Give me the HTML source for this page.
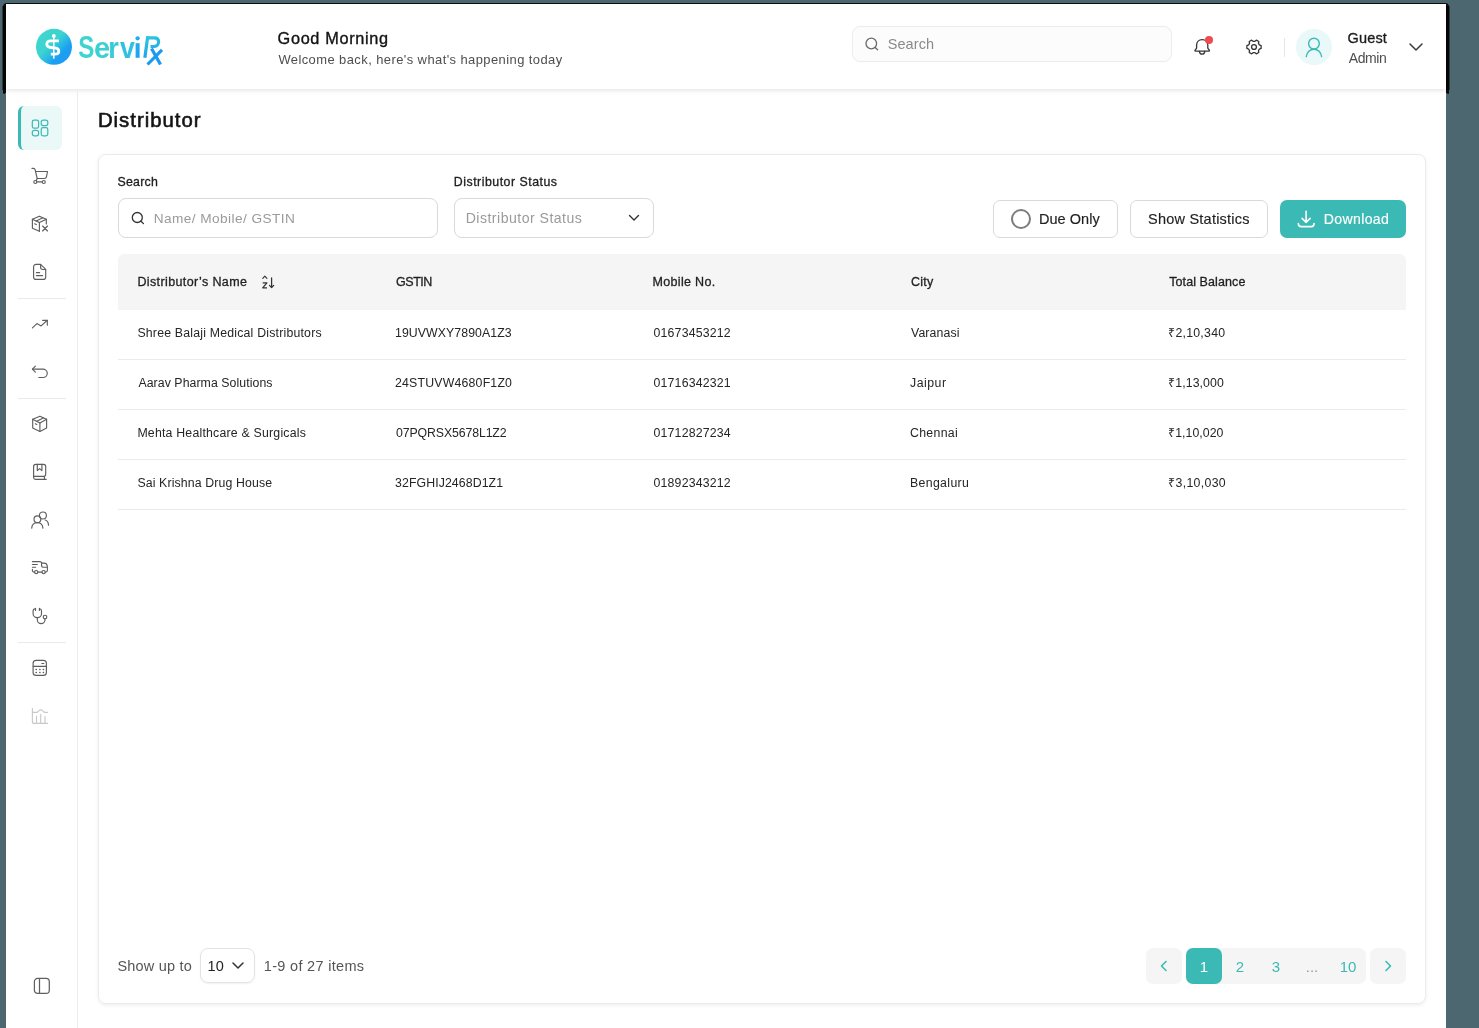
<!DOCTYPE html>
<html><head><meta charset="utf-8">
<style>
*{box-sizing:border-box;margin:0;padding:0}
html,body{width:1479px;height:1028px;overflow:hidden;background:#4c676f;font-family:"Liberation Sans",sans-serif;color:#1a1a1a}
#root{position:absolute;left:0;top:0;width:1479px;height:1028px;will-change:transform}
#root div{position:absolute}
.t{white-space:nowrap;line-height:1}
svg{position:absolute;overflow:visible}
</style></head><body><div id="root">

<div style="left:3px;top:3px;width:1446px;height:90px;background:#0d0d0d;border-radius:4px 4px 0 0"></div>
<div style="left:2px;top:6px;width:1448px;height:84px;background:rgba(0,0,0,0.45)"></div>
<div style="left:3px;top:92px;width:2px;height:2px;background:rgba(0,0,0,0.6)"></div>
<div style="left:1447px;top:92px;width:2px;height:2px;background:rgba(0,0,0,0.6)"></div>
<div style="left:6px;top:4px;width:1440px;height:1030px;background:#fff"></div>
<div style="left:6px;top:4px;width:1440px;height:85px;background:#fff;box-shadow:0 2px 3px rgba(0,0,0,0.06),0 3px 7px rgba(0,0,0,0.03)"></div>
<!-- logo -->
<svg style="left:34px;top:27px" width="40" height="40" viewBox="0 0 40 40">
  <defs><linearGradient id="lg1" x1="0" y1="0" x2="1" y2="1"><stop offset="0" stop-color="#40d8cd"/><stop offset="0.42" stop-color="#3cd3d0"/><stop offset="0.55" stop-color="#2bbee1"/><stop offset="0.7" stop-color="#1c9ff1"/><stop offset="1" stop-color="#1a9af2"/></linearGradient></defs>
  <circle cx="20" cy="19.8" r="18" fill="url(#lg1)"/>
  <path d="M19.8 9.5 L19.8 31.8" stroke="#fff" stroke-width="1.45"/>
  <circle cx="19.8" cy="8.9" r="1.95" fill="#fff"/>
  <path d="M24.9 13.9 L16.5 13.9 C14.2 13.9 12.8 15.3 12.8 17.1 C12.8 19 14.3 20.3 16.5 20.5 L20.8 20.9 C23.2 21.1 24.8 22.4 24.8 24.2 C24.8 26 23.3 27.2 21 27.2 L16.8 27.2" fill="none" stroke="#fff" stroke-width="2.8" stroke-linecap="butt"/>
</svg>
<svg style="left:70px;top:20px" width="110" height="50" viewBox="70 20 110 50">
  <defs><linearGradient id="lg2" gradientUnits="userSpaceOnUse" x1="79" y1="36" x2="165" y2="66"><stop offset="0" stop-color="#3fd5cf"/><stop offset="0.22" stop-color="#3cd1d2"/><stop offset="0.48" stop-color="#2cbde3"/><stop offset="0.72" stop-color="#1c9ff1"/><stop offset="1" stop-color="#1a9af2"/></linearGradient><linearGradient id="lg3" gradientUnits="userSpaceOnUse" x1="150" y1="36" x2="156" y2="58"><stop offset="0" stop-color="#2cc6dd"/><stop offset="0.45" stop-color="#25b5e6"/><stop offset="1" stop-color="#1a9cf2"/></linearGradient></defs>
  <g fill="url(#lg2)" font-family="Liberation Sans" font-weight="700">
    <text transform="translate(78.33,57.8) scale(0.768,1)" x="0" y="0" font-size="31.4" fill="#3ed4cf">S</text>
    <text transform="translate(93.99,57.8) scale(1.014,1)" x="0" y="0" font-size="28.7" fill="#3cd1d1">e</text>
    <text transform="translate(108.31,57.8) scale(0.944,1)" x="0" y="0" font-size="28.7" fill="#37cad8">r</text>
    <text transform="translate(120,57.8) scale(0.931,1)" x="0" y="0" font-size="28.7" fill="#30c1e0">v</text>
    <rect x="135.6" y="43.2" width="4" height="14.6"/>
    <circle cx="137.6" cy="38.3" r="2.15"/>
  </g>
  <g fill="none" stroke="url(#lg3)" stroke-width="3.2">
    <path d="M144.85 57.7 L147.75 36.2"/>
    <path d="M147.2 37.85 L154.5 37.85 C157.5 37.85 158.6 40 158.6 42 C158.6 44.5 156.5 46.5 153.5 46.5 L150.5 46.5"/>
  </g>
  <g fill="none" stroke="#1a9af2" stroke-width="3.2">
    <path d="M151.5 48.5 L160.5 64.5"/>
    <path d="M162 49.8 L147.5 64.5"/>
  </g>
</svg>

<div class="t" style="left:277.60px;top:30.04px;font-size:16.3px;color:#121212;letter-spacing:0.664px;-webkit-text-stroke:0.35px #121212">Good Morning</div>
<div class="t" style="left:278.40px;top:53.89px;font-size:12.95px;color:#4e4e4e;letter-spacing:0.429px">Welcome back, here's what's happening today</div>
<div style="left:852px;top:26px;width:320px;height:36px;border:1px solid #ececec;border-radius:8px;background:#fcfcfc"></div>
<svg style="left:860px;top:32px" width="24" height="24" viewBox="0 0 24 24"><circle cx="11.3" cy="11.5" r="5.3" fill="none" stroke="#6a6a6a" stroke-width="1.3"/><path d="M15.2 15.5 L17.6 17.8" stroke="#6a6a6a" stroke-width="1.3" stroke-linecap="round"/></svg>
<div class="t" style="left:887.70px;top:37.08px;font-size:14.5px;color:#8a8a8a;letter-spacing:0.080px">Search</div>
<svg style="left:1188px;top:31px" width="32" height="32" viewBox="0 0 32 32">
  <path fill="none" stroke="#353535" stroke-width="1.3" stroke-linejoin="round" d="M14.2 8.6 C10.9 8.6 8.6 10.8 8.6 14 L8.6 17 C8.6 17.8 6.9 18.6 6.9 19.5 C6.9 19.9 7.2 20.1 7.6 20.1 L20.8 20.1 C21.2 20.1 21.5 19.9 21.5 19.5 C21.5 18.6 19.8 17.8 19.8 17 L19.8 14 C19.8 10.8 17.5 8.6 14.2 8.6 Z"/>
  <path fill="none" stroke="#353535" stroke-width="1.3" stroke-linecap="round" d="M11.4 20.4 C11.6 22.3 12.7 23.2 14.1 23.2 C15.5 23.2 16.6 22.3 16.8 20.4"/>
</svg>
<div style="left:1205.05px;top:35.85px;width:8.1px;height:8.1px;border-radius:50%;background:#ee4a4f"></div>
<svg style="left:1238px;top:31px" width="32" height="32" viewBox="0 0 32 32">
  <circle cx="16" cy="16" r="2.45" fill="none" stroke="#353535" stroke-width="1.3"/>
  <path fill="none" stroke="#353535" stroke-width="1.3" stroke-linejoin="round" d="M23.12 14.62 L23.12 17.38 L21.37 18.06 L20.47 19.62 L20.76 21.47 L18.36 22.86 L16.90 21.68 L15.10 21.68 L13.64 22.86 L11.24 21.47 L11.53 19.62 L10.63 18.06 L8.88 17.38 L8.88 14.62 L10.63 13.94 L11.53 12.38 L11.24 10.53 L13.64 9.14 L15.10 10.32 L16.90 10.32 L18.36 9.14 L20.76 10.53 L20.47 12.38 L21.37 13.94 Z"/>
</svg>
<div style="left:1284px;top:38px;width:1px;height:19px;background:#e6e6e6"></div>
<div style="left:1296px;top:29px;width:36px;height:36px;border-radius:50%;background:#e9f8f8"></div>
<svg style="left:1296px;top:29px" width="36" height="36" viewBox="0 0 36 36">
  <circle cx="17.95" cy="14.6" r="5.35" fill="none" stroke="#3bb9b4" stroke-width="1.4"/>
  <path d="M10.3 27.6 C10.8 23.3 14 20.3 17.95 20.3 C21.9 20.3 25.1 23.3 25.6 27.6" fill="none" stroke="#3bb9b4" stroke-width="1.4" stroke-linecap="round"/>
</svg>
<div class="t" style="left:1347.50px;top:30.78px;font-size:14.5px;color:#1b1b1b;letter-spacing:0.175px;-webkit-text-stroke:0.3px #1b1b1b">Guest</div>
<div class="t" style="left:1348.80px;top:51.30px;font-size:14.0px;color:#4d4d4d;letter-spacing:-0.450px">Admin</div>
<svg style="left:1407px;top:40px" width="16" height="14" viewBox="0 0 16 14"><path d="M3 4 L9 10 L15 4" fill="none" stroke="#3a3a3a" stroke-width="1.5" stroke-linecap="round" stroke-linejoin="round"/></svg>
<div style="left:77px;top:89px;width:1px;height:940px;background:#ededed"></div>
<div style="left:18px;top:106px;width:44px;height:44px;border-radius:6px;background:#eaf8f8;border-left:3px solid #3bb9b4"></div>
<div style="left:18px;top:298px;width:48px;height:1px;background:#e9e9e9"></div>
<div style="left:18px;top:398px;width:48px;height:1px;background:#e9e9e9"></div>
<div style="left:18px;top:642px;width:48px;height:1px;background:#e9e9e9"></div>
<div class="t" style="left:97.90px;top:110.00px;font-size:20.35px;color:#141414;letter-spacing:0.990px;-webkit-text-stroke:0.6px #141414">Distributor</div>
<div style="left:98px;top:154px;width:1328px;height:850px;border:1px solid #ebebeb;border-radius:8px;box-shadow:0 2px 3px rgba(0,0,0,0.045),0 0 6px rgba(0,0,0,0.035)"></div>
<div class="t" style="left:117.50px;top:175.80px;font-size:12.35px;color:#1d1d1d;letter-spacing:0.260px;-webkit-text-stroke:0.3px #1d1d1d">Search</div>
<div class="t" style="left:453.80px;top:175.80px;font-size:12.35px;color:#1d1d1d;letter-spacing:0.500px;-webkit-text-stroke:0.3px #1d1d1d">Distributor Status</div>
<div style="left:118px;top:198px;width:320px;height:40px;border:1px solid #d9d9d9;border-radius:8px"></div>
<svg style="left:130px;top:210px" width="16" height="16" viewBox="0 0 16 16"><circle cx="7.3" cy="7.5" r="5" fill="none" stroke="#333" stroke-width="1.3"/><path d="M11 11.2 L13.5 13.6" stroke="#333" stroke-width="1.3" stroke-linecap="round"/></svg>
<div class="t" style="left:153.80px;top:211.79px;font-size:13.66px;color:#9a9a9a;letter-spacing:0.411px">Name/ Mobile/ GSTIN</div>
<div style="left:454px;top:198px;width:200px;height:40px;border:1px solid #d9d9d9;border-radius:8px"></div>
<div class="t" style="left:465.70px;top:211.21px;font-size:14.1px;color:#9a9a9a;letter-spacing:0.476px">Distributor Status</div>
<svg style="left:627px;top:212px" width="14" height="12" viewBox="0 0 14 12"><path d="M2.5 3.5 L7 8 L11.5 3.5" fill="none" stroke="#333" stroke-width="1.4" stroke-linecap="round" stroke-linejoin="round"/></svg>
<div style="left:993px;top:200px;width:125px;height:38px;border:1px solid #d9d9d9;border-radius:7px"></div>
<div style="left:1010.9px;top:209px;width:20px;height:20px;border:2px solid #7d7d7d;border-radius:50%"></div>
<div class="t" style="left:1039.00px;top:211.98px;font-size:14.5px;color:#1f1f1f;letter-spacing:0.043px;-webkit-text-stroke:0.15px #1f1f1f">Due Only</div>
<div style="left:1130px;top:200px;width:138px;height:38px;border:1px solid #d9d9d9;border-radius:7px"></div>
<div class="t" style="left:1148.00px;top:211.98px;font-size:14.5px;color:#1f1f1f;letter-spacing:0.229px;-webkit-text-stroke:0.15px #1f1f1f">Show Statistics</div>
<div style="left:1280px;top:200px;width:126px;height:38px;border-radius:7px;background:#3bb9b4"></div>
<svg style="left:1295px;top:208px" width="22" height="22" viewBox="0 0 22 22">
  <path d="M11.1 3.3 L11.1 14.2 M7.1 10.4 L11.1 14.4 L15.1 10.4" fill="none" stroke="#fff" stroke-width="1.6" stroke-linecap="round" stroke-linejoin="round"/>
  <path d="M3.3 15.5 C3.3 17.4 4.4 18.6 6.3 18.6 L16.1 18.6 C18 18.6 19.1 17.4 19.1 15.5" fill="none" stroke="#fff" stroke-width="1.6" stroke-linecap="round" stroke-linejoin="round"/>
</svg>
<div class="t" style="left:1323.80px;top:212.21px;font-size:14.1px;color:#fff;letter-spacing:0.343px;-webkit-text-stroke:0.15px #fff">Download</div>
<div style="left:118px;top:254px;width:1288px;height:56px;background:#f5f5f5;border-radius:6px 6px 0 0"></div>
<div class="t" style="left:137.40px;top:275.88px;font-size:12.5px;color:#1f1f1f;letter-spacing:0.382px;-webkit-text-stroke:0.3px #1f1f1f">Distributor’s Name</div>
<div class="t" style="left:396.00px;top:275.88px;font-size:12.5px;color:#1f1f1f;letter-spacing:-0.450px;-webkit-text-stroke:0.3px #1f1f1f">GSTIN</div>
<div class="t" style="left:652.60px;top:275.88px;font-size:12.5px;color:#1f1f1f;letter-spacing:0.311px;-webkit-text-stroke:0.3px #1f1f1f">Mobile No.</div>
<div class="t" style="left:911.00px;top:275.88px;font-size:12.5px;color:#1f1f1f;letter-spacing:0.267px;-webkit-text-stroke:0.3px #1f1f1f">City</div>
<div class="t" style="left:1169.20px;top:275.88px;font-size:12.5px;color:#1f1f1f;letter-spacing:0.092px;-webkit-text-stroke:0.3px #1f1f1f">Total Balance</div>
<svg style="left:259px;top:273px" width="18" height="18" viewBox="0 0 18 18">
  <path d="M3.8 5.4 L5.85 3.1 L7.9 5.4" fill="none" stroke="#333" stroke-width="1.1" stroke-linecap="round" stroke-linejoin="round"/>
  <path d="M3.7 9.9 L7.9 9.9 L3.7 14.8 L8 14.8" fill="none" stroke="#333" stroke-width="1.25" stroke-linejoin="round"/>
  <path d="M12.6 4.9 L12.6 14.6 M10.5 12.4 L12.6 14.6 L14.7 12.4" fill="none" stroke="#333" stroke-width="1.25" stroke-linecap="round" stroke-linejoin="round"/>
</svg>
<div style="left:118px;top:310px;width:1288px;height:50px;border-bottom:1px solid #ebebeb"></div>
<div class="t" style="left:137.40px;top:326.94px;font-size:12.3px;color:#252525;letter-spacing:0.203px">Shree Balaji Medical Distributors</div>
<div class="t" style="left:395.00px;top:326.94px;font-size:12.3px;color:#252525;letter-spacing:0.079px">19UVWXY7890A1Z3</div>
<div class="t" style="left:653.60px;top:326.94px;font-size:12.3px;color:#252525;letter-spacing:0.170px">01673453212</div>
<div class="t" style="left:911.00px;top:326.94px;font-size:12.3px;color:#252525;letter-spacing:0.114px">Varanasi</div>
<div class="t" style="left:1168.20px;top:326.94px;font-size:12.3px;color:#252525;letter-spacing:0.250px">₹2,10,340</div>
<div style="left:118px;top:360px;width:1288px;height:50px;border-bottom:1px solid #ebebeb"></div>
<div class="t" style="left:138.40px;top:376.94px;font-size:12.3px;color:#252525;letter-spacing:0.071px">Aarav Pharma Solutions</div>
<div class="t" style="left:395.00px;top:376.94px;font-size:12.3px;color:#252525;letter-spacing:0.200px">24STUVW4680F1Z0</div>
<div class="t" style="left:653.60px;top:376.94px;font-size:12.3px;color:#252525;letter-spacing:0.170px">01716342321</div>
<div class="t" style="left:910.00px;top:376.94px;font-size:12.3px;color:#252525;letter-spacing:0.500px">Jaipur</div>
<div class="t" style="left:1168.20px;top:376.94px;font-size:12.3px;color:#252525;letter-spacing:0.088px">₹1,13,000</div>
<div style="left:118px;top:410px;width:1288px;height:50px;border-bottom:1px solid #ebebeb"></div>
<div class="t" style="left:137.40px;top:426.94px;font-size:12.3px;color:#252525;letter-spacing:0.215px">Mehta Healthcare &amp; Surgicals</div>
<div class="t" style="left:396.00px;top:426.94px;font-size:12.3px;color:#252525;letter-spacing:-0.107px">07PQRSX5678L1Z2</div>
<div class="t" style="left:653.60px;top:426.94px;font-size:12.3px;color:#252525;letter-spacing:0.170px">01712827234</div>
<div class="t" style="left:910.00px;top:426.94px;font-size:12.3px;color:#252525;letter-spacing:0.317px">Chennai</div>
<div class="t" style="left:1168.20px;top:426.94px;font-size:12.3px;color:#252525;letter-spacing:0.037px">₹1,10,020</div>
<div style="left:118px;top:460px;width:1288px;height:50px;border-bottom:1px solid #ebebeb"></div>
<div class="t" style="left:137.40px;top:476.94px;font-size:12.3px;color:#252525;letter-spacing:0.129px">Sai Krishna Drug House</div>
<div class="t" style="left:395.00px;top:476.94px;font-size:12.3px;color:#252525;letter-spacing:0.100px">32FGHIJ2468D1Z1</div>
<div class="t" style="left:653.60px;top:476.94px;font-size:12.3px;color:#252525;letter-spacing:0.170px">01892343212</div>
<div class="t" style="left:910.00px;top:476.94px;font-size:12.3px;color:#252525;letter-spacing:0.350px">Bengaluru</div>
<div class="t" style="left:1168.20px;top:476.94px;font-size:12.3px;color:#252525;letter-spacing:0.325px">₹3,10,030</div>
<div class="t" style="left:117.40px;top:959.38px;font-size:14.5px;color:#555;letter-spacing:0.211px">Show up to</div>
<div style="left:200px;top:948px;width:55px;height:35px;border:1px solid #e3e3e3;border-radius:8px;box-shadow:0 1px 2px rgba(0,0,0,0.06)"></div>
<div class="t" style="left:207.60px;top:959.38px;font-size:14.5px;color:#222">10</div>
<svg style="left:230px;top:959px" width="16" height="14" viewBox="0 0 16 14"><path d="M3 4 L8 9 L13 4" fill="none" stroke="#333" stroke-width="1.5" stroke-linecap="round" stroke-linejoin="round"/></svg>
<div class="t" style="left:263.80px;top:959.38px;font-size:14.5px;color:#555;letter-spacing:0.314px">1-9 of 27 items</div>
<div style="left:1146px;top:948px;width:36px;height:36px;border-radius:7px;background:#f5f5f5"></div>
<svg style="left:1156px;top:958px" width="16" height="16" viewBox="0 0 16 16"><path d="M10 3.5 L5.5 8 L10 12.5" fill="none" stroke="#3bb9b4" stroke-width="1.6" stroke-linecap="round" stroke-linejoin="round"/></svg>
<div style="left:1186px;top:948px;width:180px;height:36px;border-radius:7px;background:#f5f5f5"></div>
<div style="left:1186px;top:948px;width:36px;height:36px;border-radius:7px;background:#3bb9b4"></div>
<div class="t" style="left:1174px;top:958.75px;width:60px;text-align:center;font-size:15px;color:#fff">1</div>
<div class="t" style="left:1210px;top:958.75px;width:60px;text-align:center;font-size:15px;color:#3bb9b4">2</div>
<div class="t" style="left:1246px;top:958.75px;width:60px;text-align:center;font-size:15px;color:#3bb9b4">3</div>
<div class="t" style="left:1282px;top:958.75px;width:60px;text-align:center;font-size:15px;color:#999">...</div>
<div class="t" style="left:1318px;top:958.75px;width:60px;text-align:center;font-size:15px;color:#3bb9b4">10</div>
<div style="left:1370px;top:948px;width:36px;height:36px;border-radius:7px;background:#f5f5f5"></div>
<svg style="left:1380px;top:958px" width="16" height="16" viewBox="0 0 16 16"><path d="M6 3.5 L10.5 8 L6 12.5" fill="none" stroke="#3bb9b4" stroke-width="1.6" stroke-linecap="round" stroke-linejoin="round"/></svg>
<!-- SIDEBAR ICONS -->
<svg style="left:28px;top:116px" width="24" height="24" viewBox="0 0 24 24" fill="none" stroke="#3bb9b4" stroke-width="1.2" stroke-linecap="round" stroke-linejoin="round"><rect x="4.3" y="4.1" width="6.3" height="8.1" rx="1.8"/><rect x="13.2" y="4.2" width="6.6" height="5.4" rx="2"/><rect x="4.3" y="14.3" width="6.3" height="5.5" rx="2"/><rect x="13.2" y="11.6" width="6.6" height="8.2" rx="1.8"/></svg>
<svg style="left:28px;top:164px" width="24" height="24" viewBox="0 0 24 24" fill="none" stroke="#5e5e5e" stroke-width="1.15" stroke-linecap="round" stroke-linejoin="round"><path d="M4 4.4 L5.4 4.4 C6.2 4.4 6.9 4.9 7.1 5.7 L9.2 14.5 L8.3 16.4"/><path d="M7.6 7.5 L19.5 7.5 L18.5 12.6 C18.3 13.7 17.4 14.5 16.3 14.5 L9.2 14.5"/><path d="M8.9 17.8 L14.2 17.8"/><circle cx="7.3" cy="18" r="1.5"/><circle cx="15.8" cy="18" r="1.5"/></svg>
<svg style="left:28px;top:212px" width="24" height="24" viewBox="0 0 24 24" fill="none" stroke="#5e5e5e" stroke-width="1.15" stroke-linecap="round" stroke-linejoin="round"><path d="M18.3 12 L18.3 7.3 L11.4 4.2 L4.4 7.3 L4.4 16.2 L11.4 19.3"/><path d="M4.4 7.3 L11.4 10.6 L18.3 7.3"/><path d="M11.4 10.6 L11.4 19.3"/><path d="M8.2 8.9 L14.8 5.8"/><path d="M6.6 11.8 L8.3 12.6"/><path d="M14.6 14 L19.5 19 M19.5 14 L14.6 19"/></svg>
<svg style="left:28px;top:260px" width="24" height="24" viewBox="0 0 24 24" fill="none" stroke="#5e5e5e" stroke-width="1.15" stroke-linecap="round" stroke-linejoin="round"><path d="M12.6 4.3 L8 4.3 C6.6 4.3 5.6 5.4 5.6 6.8 L5.6 16.9 C5.6 18.3 6.6 19.4 8 19.4 L15.3 19.4 C16.7 19.4 17.7 18.3 17.7 16.9 L17.7 9.4 Z"/><path d="M12.6 4.5 L12.6 7.3 C12.6 8.6 13.5 9.5 14.8 9.5 L17.6 9.5"/><path d="M8.4 12.6 L11.6 12.6 M8.4 15.6 L14.6 15.6"/></svg>
<svg style="left:28px;top:312px" width="24" height="24" viewBox="0 0 24 24" fill="none" stroke="#5e5e5e" stroke-width="1.15" stroke-linecap="round" stroke-linejoin="round"><path d="M4.4 15.8 L8.9 11.6 L13.1 13.9 L19.3 8.3"/><path d="M14.6 8.3 L19.3 8.3 L19.3 13.2"/></svg>
<svg style="left:28px;top:360px" width="24" height="24" viewBox="0 0 24 24" fill="none" stroke="#5e5e5e" stroke-width="1.15" stroke-linecap="round" stroke-linejoin="round"><path d="M7.4 6.1 L4.4 9.1 L7.4 12.1"/><path d="M4.6 9.1 L14.9 9.1 C17.3 9.1 19.3 11 19.3 13.3 C19.3 15.6 17.3 17.5 14.9 17.5 L10.8 17.5"/></svg>
<svg style="left:28px;top:412px" width="24" height="24" viewBox="0 0 24 24" fill="none" stroke="#5e5e5e" stroke-width="1.15" stroke-linecap="round" stroke-linejoin="round"><path d="M11.9 4.2 L18.6 7.2 L18.6 16.1 L11.9 19.5 L4.7 16.1 L4.7 7.2 Z"/><path d="M4.7 7.2 L11.9 10.9 L18.6 7.2"/><path d="M11.9 10.9 L11.9 19.5"/><path d="M8.8 9.2 L15.3 5.9"/><path d="M7.4 11.8 L8.8 12.5"/></svg>
<svg style="left:28px;top:460px" width="24" height="24" viewBox="0 0 24 24" fill="none" stroke="#5e5e5e" stroke-width="1.15" stroke-linecap="round" stroke-linejoin="round"><path d="M5.6 16.4 L5.6 6.5 C5.6 5.3 6.6 4.3 7.8 4.3 L15.5 4.3 C16.7 4.3 17.7 5.3 17.7 6.5 L17.7 14.2 C17.7 15.4 16.7 16.4 15.5 16.4 Z"/><path d="M5.6 16.4 L5.6 17.5 C5.6 18.6 6.4 19.4 7.5 19.4 L18.2 19.4"/><path d="M16.4 16.4 L16.4 19.3"/><path d="M9.3 4.4 L9.3 10.6 L11.6 8.6 L13.9 10.6 L13.9 4.4"/></svg>
<svg style="left:28px;top:508px" width="24" height="24" viewBox="0 0 24 24" fill="none" stroke="#5e5e5e" stroke-width="1.15" stroke-linecap="round" stroke-linejoin="round"><circle cx="14.9" cy="7.5" r="3.5"/><circle cx="9.4" cy="11.2" r="3.4"/><path d="M3.7 20.1 C3.9 16.8 6.3 14.8 9.4 14.8 C12.5 14.8 14.7 16.8 14.9 20.1"/><path d="M17.2 12 C19.3 12.6 20.4 14.6 20.5 17.2"/></svg>
<svg style="left:28px;top:556px" width="24" height="24" viewBox="0 0 24 24" fill="none" stroke="#5e5e5e" stroke-width="1.15" stroke-linecap="round" stroke-linejoin="round"><path d="M4.4 5.6 L11.8 5.6 C12.4 5.6 12.9 5.9 13.3 6.3 L14.2 7.1 L16.1 7.1 C17.8 7.1 19 8.3 19.3 10 L19.4 14.3 C19.4 15.3 18.6 16.1 17.6 16.1 L17.3 16.1"/><path d="M13.6 7.3 L13.6 9.8 C13.6 10.6 14.2 11.2 15 11.2 L19.3 11.2"/><path d="M4.4 8.5 L9.3 8.5 M4.4 11.2 L7.6 11.2"/><path d="M4.4 13.4 L4.4 14.6 C4.4 15.4 5 16.1 5.9 16.1 L6.6 16.1"/><path d="M9.8 16.1 L14 16.1"/><circle cx="8.2" cy="16.1" r="1.6"/><circle cx="15.6" cy="16.1" r="1.6"/></svg>
<svg style="left:28px;top:604px" width="24" height="24" viewBox="0 0 24 24" fill="none" stroke="#5e5e5e" stroke-width="1.15" stroke-linecap="round" stroke-linejoin="round"><path d="M7.5 4.2 L7.5 6.5 M11.4 4.2 L11.4 6.5"/><path d="M7.2 4.8 C5.9 4.9 5.1 5.7 5.1 7 L5.1 9.7 C5.1 11.9 7 13.6 9.3 13.6 C11.6 13.6 13.5 11.9 13.5 9.7 L13.5 7 C13.5 5.7 12.7 4.9 11.6 4.8"/><path d="M9.3 13.6 L9.3 15.8 C9.3 17.9 11 19.6 13.1 19.6 C15.2 19.6 17 17.9 17 15.8 L17 14.8"/><circle cx="17" cy="13" r="1.8"/></svg>
<svg style="left:28px;top:656px" width="24" height="24" viewBox="0 0 24 24" fill="none" stroke="#5e5e5e" stroke-width="1.15" stroke-linecap="round" stroke-linejoin="round"><rect x="5.1" y="4.3" width="13.3" height="15.1" rx="3"/><path d="M5.2 10.3 L18.3 10.3"/><path d="M13.8 7.5 L15.8 7.5"/><path d="M8.1 13.4 L8.3 13.4 M11.8 13.4 L12 13.4 M15.3 13.4 L15.5 13.4 M8.1 16.5 L8.3 16.5 M11.8 16.5 L12 16.5 M15.3 16.5 L15.5 16.5" stroke-width="1.5"/></svg>
<svg style="left:28px;top:704px" width="24" height="24" viewBox="0 0 24 24" fill="none" stroke="#c9c9c9" stroke-width="1.15" stroke-linecap="round" stroke-linejoin="round"><path d="M4.4 4.2 L4.4 17.4 C4.4 18.5 5.3 19.4 6.4 19.4 L19.6 19.4"/><path d="M4.7 8.4 L8.6 8.4 C9.3 8.4 9.9 8 10.3 7.4 C11.5 5.4 14.1 5.4 15.3 7.4 C15.7 8 16.3 8.4 17 8.4 L19.6 8.4"/><path d="M8.5 12.4 L8.5 19.2 M12.7 10.4 L12.7 19.2 M17 12.6 L17 19.2"/></svg>
<svg style="left:29px;top:974px" width="24" height="24" viewBox="0 0 24 24" fill="none" stroke="#606060" stroke-width="1.25" stroke-linecap="round" stroke-linejoin="round"><rect x="5.4" y="4.4" width="14.9" height="15" rx="3.2"/><path d="M10.5 4.5 L10.5 19.3"/></svg>

</div></body></html>
